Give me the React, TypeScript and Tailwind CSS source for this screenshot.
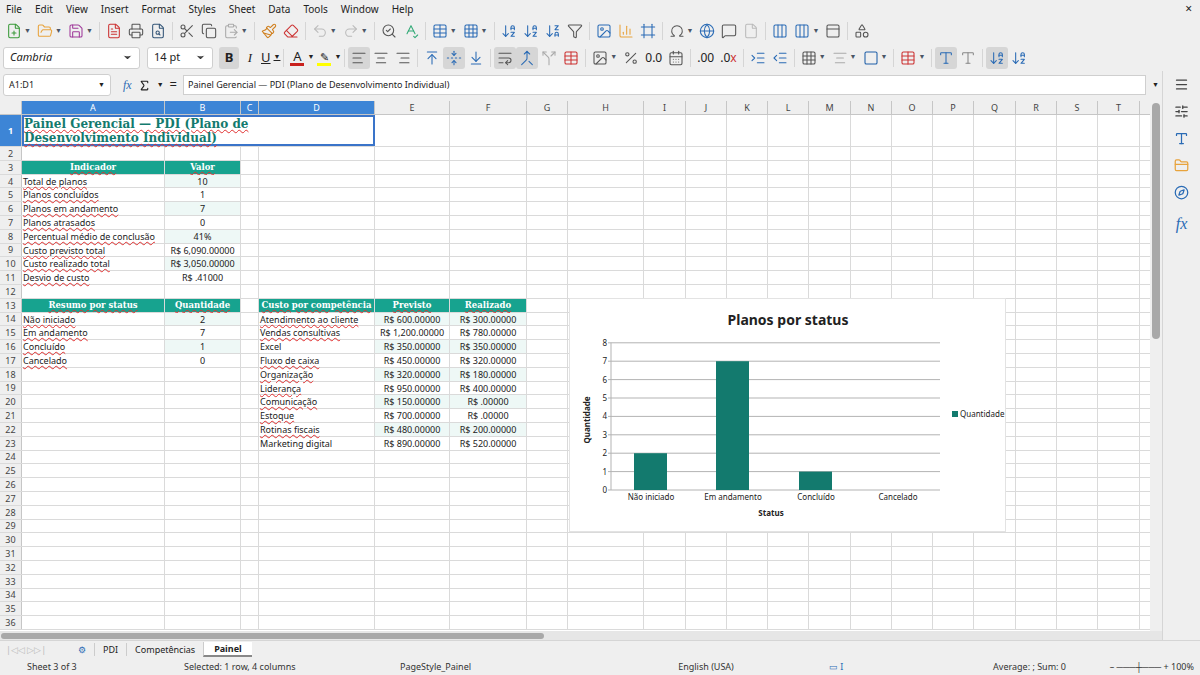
import {
  FilePlus, FolderOpen, Save, FileText, Printer, FileSearch, Scissors, Copy, ClipboardPaste, Paintbrush, Eraser,
  Undo2, Redo2, SearchCheck, SpellCheck, Table, Grid3x3, ArrowDownAZ, ArrowDownZA, Filter, Image, BarChart3,
  Frame, Omega, Globe, MessageSquare, File, Columns3, PanelTop, Shapes, ChevronDown, AlignLeft, AlignCenter,
  AlignRight, ArrowUpToLine, FoldVertical, ArrowDownToLine, WrapText, Merge, Split, Percent, CalendarDays,
  IndentIncrease, IndentDecrease, Square, Menu, SlidersHorizontal, Type, FolderClosed, Compass, Sigma,
} from 'lucide-react';

const COLS: [string, number][] = [
  ['A', 143], ['B', 76], ['C', 18], ['D', 116], ['E', 75], ['F', 77], ['G', 41], ['H', 76], ['I', 42], ['J', 41],
  ['K', 41], ['L', 41], ['M', 42], ['N', 41], ['O', 41], ['P', 41], ['Q', 42], ['R', 41], ['S', 41], ['T', 42],
];

type Cell = { t: string; c?: boolean; h?: boolean; sp?: boolean };
const DATA: Record<number, Record<string, Cell>> = {
  3: { A: { t: 'Indicador', h: true }, B: { t: 'Valor', h: true } },
  4: { A: { t: 'Total de planos', sp: true }, B: { t: '10', c: true } },
  5: { A: { t: 'Planos concluídos', sp: true }, B: { t: '1', c: true } },
  6: { A: { t: 'Planos em andamento', sp: true }, B: { t: '7', c: true } },
  7: { A: { t: 'Planos atrasados', sp: true }, B: { t: '0', c: true } },
  8: { A: { t: 'Percentual médio de conclusão', sp: true }, B: { t: '41%', c: true } },
  9: { A: { t: 'Custo previsto total', sp: true }, B: { t: 'R$ 6,090.00000', c: true } },
  10: { A: { t: 'Custo realizado total', sp: true }, B: { t: 'R$ 3,050.00000', c: true } },
  11: { A: { t: 'Desvio de custo', sp: true }, B: { t: 'R$ .41000', c: true } },
  13: {
    A: { t: 'Resumo por status', h: true }, B: { t: 'Quantidade', h: true },
    D: { t: 'Custo por competência', h: true }, E: { t: 'Previsto', h: true }, F: { t: 'Realizado', h: true },
  },
  14: { A: { t: 'Não iniciado', sp: true }, B: { t: '2', c: true }, D: { t: 'Atendimento ao cliente', sp: true }, E: { t: 'R$ 600.00000', c: true }, F: { t: 'R$ 300.00000', c: true } },
  15: { A: { t: 'Em andamento', sp: true }, B: { t: '7', c: true }, D: { t: 'Vendas consultivas', sp: true }, E: { t: 'R$ 1,200.00000', c: true }, F: { t: 'R$ 780.00000', c: true } },
  16: { A: { t: 'Concluído', sp: true }, B: { t: '1', c: true }, D: { t: 'Excel' }, E: { t: 'R$ 350.00000', c: true }, F: { t: 'R$ 350.00000', c: true } },
  17: { A: { t: 'Cancelado', sp: true }, B: { t: '0', c: true }, D: { t: 'Fluxo de caixa', sp: true }, E: { t: 'R$ 450.00000', c: true }, F: { t: 'R$ 320.00000', c: true } },
  18: { D: { t: 'Organização', sp: true }, E: { t: 'R$ 320.00000', c: true }, F: { t: 'R$ 180.00000', c: true } },
  19: { D: { t: 'Liderança', sp: true }, E: { t: 'R$ 950.00000', c: true }, F: { t: 'R$ 400.00000', c: true } },
  20: { D: { t: 'Comunicação', sp: true }, E: { t: 'R$ 150.00000', c: true }, F: { t: 'R$ .00000', c: true } },
  21: { D: { t: 'Estoque', sp: true }, E: { t: 'R$ 700.00000', c: true }, F: { t: 'R$ .00000', c: true } },
  22: { D: { t: 'Rotinas fiscais', sp: true }, E: { t: 'R$ 480.00000', c: true }, F: { t: 'R$ 200.00000', c: true } },
  23: { D: { t: 'Marketing digital' }, E: { t: 'R$ 890.00000', c: true }, F: { t: 'R$ 520.00000', c: true } },
};
const TINT: Record<number, string[]> = {
  4: ['B'], 6: ['B'], 8: ['B'], 10: ['B'],
  14: ['B', 'E', 'F'], 16: ['B', 'E', 'F'], 18: ['E', 'F'], 20: ['E', 'F'], 22: ['E', 'F'],
};

function Ico({ I, c = '#555', dd }: { I: any; c?: string; dd?: boolean }) {
  return (
    <div className="flex h-[22px] items-center px-[3px]">
      <I size={16} color={c} strokeWidth={1.6} />
      {dd && <span className="ml-[2px] text-[7px] text-gray-600">▼</span>}
    </div>
  );
}
const Sep = () => <div className="mx-[3px] h-[18px] w-px bg-[#d5d5d5]" />;

function Chart() {
  const y0 = 191, unit = 18.4;
  const bars = [['Não iniciado', 2, 81], ['Em andamento', 7, 163], ['Concluído', 1, 246], ['Cancelado', 0, 328]] as const;
  return (
    <div className="absolute left-[569px] top-[197px] h-[234px] w-[437px] border border-[#e3e3e3] bg-white">
      <svg width="437" height="234" style={{ fontFamily: '"Noto Sans", sans-serif' }}>
        <text x="218" y="26" textAnchor="middle" fontSize="14" fontWeight="bold" fill="#222">Planos por status</text>
        {Array.from({ length: 9 }, (_, i) => (
          <g key={i}>
            <line x1="38" x2="370" y1={y0 - i * unit} y2={y0 - i * unit} stroke="#b3b3b3" strokeWidth="1" />
            <text x="37" y={y0 - i * unit + 3} textAnchor="end" fontSize="8" fill="#222">{i}</text>
          </g>
        ))}
        <line x1="41" x2="41" y1={y0 - 8 * unit} y2={y0} stroke="#b3b3b3" />
        {bars.map(([l, v, cx]) => (
          <g key={l}>
            <rect x={cx - 17} y={y0 - v * unit} width="33" height={v * unit} fill="#137a6e" />
            <text x={cx} y={y0 + 10} textAnchor="middle" fontSize="8" fill="#222">{l}</text>
          </g>
        ))}
        <text x="201" y="217" textAnchor="middle" fontSize="8" fontWeight="bold" fill="#222">Status</text>
        <text transform="translate(20 121) rotate(-90)" textAnchor="middle" fontSize="8" fontWeight="bold" fill="#222">Quantidade</text>
        <rect x="382" y="112" width="6" height="6" fill="#137a6e" />
        <text x="390" y="118" fontSize="8" fill="#222">Quantidade</text>
      </svg>
    </div>
  );
}

export default function App() {
  const rows = Array.from({ length: 35 }, (_, i) => i + 2);
  return (
    <div className="flex h-[675px] w-[1200px] flex-col overflow-hidden bg-[#efefef] text-[#222]" style={{ fontFamily: '"Noto Sans", "Open Sans", sans-serif' }}>
      {/* menu */}
      <div className="flex h-[18px] items-center gap-[13px] px-[6px] text-[10px]">
        {['File', 'Edit', 'View', 'Insert', 'Format', 'Styles', 'Sheet', 'Data', 'Tools', 'Window', 'Help'].map((m) => (
          <span key={m}>{m}</span>
        ))}
        <span className="ml-auto pr-[2px] text-[12px]">×</span>
      </div>
      {/* toolbar 1 */}
      <div className="flex h-[26px] items-center px-[3px]">
        <Ico I={FilePlus} c="#3a9a3a" dd /><Ico I={FolderOpen} c="#e8a33c" dd /><Ico I={Save} c="#a03a9a" dd /><Sep />
        <Ico I={FileText} c="#c33" /><Ico I={Printer} /><Ico I={FileSearch} c="#357" /><Sep />
        <Ico I={Scissors} /><Ico I={Copy} /><Ico I={ClipboardPaste} c="#aaa" dd /><Sep />
        <Ico I={Paintbrush} c="#d08020" /><Ico I={Eraser} c="#c33" /><Sep />
        <Ico I={Undo2} c="#bbb" dd /><Ico I={Redo2} c="#bbb" dd /><Sep />
        <Ico I={SearchCheck} /><Ico I={SpellCheck} c="#3a7" /><Sep />
        <Ico I={Table} c="#2a6bb5" dd /><Ico I={Grid3x3} c="#2a6bb5" dd /><Sep />
        <Ico I={ArrowDownAZ} c="#2a6bb5" /><Ico I={ArrowDownAZ} c="#2a6bb5" /><Ico I={ArrowDownZA} c="#2a6bb5" /><Ico I={Filter} c="#555" /><Sep />
        <Ico I={Image} c="#2a6bb5" /><Ico I={BarChart3} c="#e8a33c" /><Ico I={Frame} c="#2a6bb5" /><Sep />
        <Ico I={Omega} dd /><Ico I={Globe} c="#2a6bb5" /><Ico I={MessageSquare} /><Ico I={File} c="#bbb" /><Sep />
        <Ico I={Columns3} c="#2a6bb5" /><Ico I={Columns3} c="#2a6bb5" dd /><Ico I={PanelTop} /><Sep />
        <Ico I={Shapes} />
      </div>
      {/* toolbar 2 */}
      <div className="flex h-[27px] items-center px-[3px] text-[11px]">
        <div className="flex h-[22px] w-[137px] items-center justify-between rounded-[3px] border border-[#cfcfcf] bg-white pl-[6px] pr-[6px] italic">
          Cambria <ChevronDown size={11} fill="#444" />
        </div>
        <div className="ml-[7px] flex h-[22px] w-[66px] items-center justify-between rounded-[3px] border border-[#cfcfcf] bg-white px-[6px]">
          14 pt <ChevronDown size={11} fill="#444" />
        </div>
        <div className="ml-[6px] flex h-[22px] w-[20px] items-center justify-center rounded-[3px] bg-[#d6d6d6] text-[13px] font-bold">B</div>
        <div className="flex w-[22px] justify-center text-[13px] italic" style={{ fontFamily: 'serif' }}>I</div>
        <div className="flex items-center text-[13px] underline">U<span className="ml-[3px] text-[7px] no-underline">▼</span></div>
        <Sep />
        <div className="flex flex-col items-center px-[3px] text-[13px] leading-[13px]">A<div className="h-[3px] w-[14px] bg-[#c9211e]" /></div><span className="text-[7px]">▼</span>
        <div className="flex flex-col items-center px-[3px] text-[11px] leading-[13px]">✎<div className="h-[3px] w-[14px] bg-[#ffff00]" /></div><span className="text-[7px]">▼</span>
        <Sep />
        <div className="rounded-[3px] bg-[#d6d6d6]"><Ico I={AlignLeft} /></div><Ico I={AlignCenter} /><Ico I={AlignRight} /><Sep />
        <Ico I={ArrowUpToLine} c="#2a6bb5" /><div className="rounded-[3px] bg-[#d6d6d6]"><Ico I={FoldVertical} c="#2a6bb5" /></div><Ico I={ArrowDownToLine} c="#2a6bb5" /><Sep />
        <div className="rounded-[3px] bg-[#d6d6d6]"><Ico I={WrapText} /></div><div className="rounded-[3px] bg-[#d6d6d6]"><Ico I={Merge} c="#2a6bb5" /></div><Ico I={Split} c="#aaa" /><Ico I={Table} c="#c33" /><Sep />
        <Ico I={Image} dd /><Ico I={Percent} /><span className="px-[3px] text-[12px]">0.0</span><Ico I={CalendarDays} /><Sep />
        <span className="px-[3px] text-[12px]">.00</span><span className="px-[3px] text-[12px]">.0<span className="text-[#c33]">x</span></span><Sep />
        <Ico I={IndentIncrease} c="#2a6bb5" /><Ico I={IndentDecrease} c="#2a6bb5" /><Sep />
        <Ico I={Grid3x3} dd /><Ico I={AlignCenter} c="#aaa" dd /><Ico I={Square} c="#1f5fa8" dd /><Sep />
        <Ico I={Table} c="#c33" dd /><Sep />
        <div className="rounded-[3px] bg-[#d6d6d6]"><Ico I={Type} c="#2a6bb5" /></div><Ico I={Type} c="#888" /><Sep />
        <div className="rounded-[3px] bg-[#d6d6d6]"><Ico I={ArrowDownAZ} c="#2a6bb5" /></div><Ico I={ArrowDownAZ} c="#2a6bb5" />
      </div>
      <div className="flex min-h-0 flex-1">
        <div className="flex min-w-0 flex-1 flex-col">
          {/* formula bar */}
          <div className="flex h-[28px] items-center gap-[6px] px-[3px] text-[9px]">
            <div className="flex h-[22px] w-[108px] items-center justify-between rounded-[3px] border border-[#cfcfcf] bg-white px-[5px]">
              A1:D1 <span className="text-[7px]">▼</span>
            </div>
            <span className="ml-[6px] text-[12px] italic text-[#2a6bb5]" style={{ fontFamily: 'serif' }}>fx</span>
            <Sigma size={13} /><span className="text-[7px]">▼</span><span className="text-[13px]">=</span>
            <div className="flex h-[20px] flex-1 items-center border border-[#cfcfcf] bg-white px-[4px]">Painel Gerencial — PDI (Plano de Desenvolvimento Individual)</div>
            <span className="text-[7px]">▼</span>
          </div>
          {/* grid */}
          <div className="relative mt-[2px] flex min-h-0 flex-1 overflow-hidden bg-white">
            <div className="flex-1 overflow-hidden text-[9px]">
              <div className="flex h-[14px] border-b border-[#c6c6c6] bg-[#efefef] text-[9px] text-[#444]">
                <div className="w-[22px] shrink-0 border-r border-[#c6c6c6]" />
                {COLS.map(([n, w], i) => (
                  <div key={n} style={{ width: w }} className={`flex shrink-0 items-center justify-center border-r border-[#c6c6c6] ${i < 4 ? 'bg-[#3d85d6] text-white' : ''}`}>{n}</div>
                ))}
              </div>
              <div className="flex h-[32px] border-b border-[#dadada]">
                <div className="flex w-[22px] shrink-0 items-center justify-center border-r border-[#c6c6c6] bg-[#3d85d6] text-[9px] font-bold text-white">1</div>
                <div className="w-[353px] shrink-0 border-2 border-[#3a74c9] pr-[40px] text-[12px] font-bold leading-[14px] text-[#137a6e] underline decoration-[#e03030] decoration-wavy decoration-1" style={{ fontFamily: '"DejaVu Serif", serif' }}>
                  Painel Gerencial — PDI (Plano de Desenvolvimento Individual)
                </div>
                {COLS.slice(4).map(([n, w]) => <div key={n} style={{ width: w }} className="shrink-0 border-r border-[#dadada]" />)}
              </div>
              {rows.map((r) => (
                <div key={r} className="flex h-[13.8px] border-b border-[#dadada] leading-[13px]">
                  <div className="flex w-[22px] shrink-0 items-center justify-center border-r border-[#c6c6c6] bg-[#efefef] text-[9px] text-[#444]">{r}</div>
                  {COLS.map(([n, w]) => {
                    const cell = DATA[r]?.[n];
                    const tint = TINT[r]?.includes(n);
                    let cls = 'shrink-0 overflow-visible whitespace-nowrap border-r border-[#dadada] px-[1px]';
                    if (cell?.h) cls += ' bg-[#17a38f] text-center font-bold text-white';
                    else if (tint) cls += ' bg-[#eef8f6]';
                    if (cell?.c) cls += ' text-center';
                    return (
                      <div key={n} style={{ width: w, fontFamily: cell?.h ? '"DejaVu Serif", serif' : undefined, fontSize: cell?.h ? 8.5 : undefined }} className={cls}>
                        {cell && (
                          <span className={cell.sp || cell.h ? 'underline decoration-[#e03030] decoration-wavy decoration-1' : ''}>{cell.t}</span>
                        )}
                      </div>
                    );
                  })}
                </div>
              ))}
              <Chart />
            </div>
            <div className="flex w-[12px] shrink-0 flex-col bg-[#efefef] pt-[2px]">
              <div className="mx-[2px] h-[236px] rounded-sm bg-[#a8a8a8]" />
            </div>
          </div>
          {/* h scroll */}
          <div className="flex h-[9px] items-center bg-[#e6e6e6]">
            <div className="ml-[1px] h-[6px] w-[543px] rounded-sm bg-[#a8a8a8]" />
          </div>
        </div>
        {/* sidebar */}
        <div className="flex w-[38px] shrink-0 flex-col items-center gap-[12px] border-l border-[#d5d5d5] pt-[6px]">
          <Menu size={15} color="#444" />
          <SlidersHorizontal size={15} color="#444" />
          <Type size={15} color="#2a6bb5" />
          <FolderClosed size={15} color="#e8a33c" />
          <Compass size={15} color="#2a6bb5" />
          <span className="italic text-[#2a6bb5]" style={{ fontFamily: 'serif' }}>fx</span>
        </div>
      </div>
      {/* tabs */}
      <div className="flex h-[18px] items-center border-t border-[#d5d5d5] text-[9px]">
        <span className="w-[70px] pl-[6px] text-[#bbb]">|◁◁ ▷▷|</span>
        <span className="px-[8px] text-[#2a6bb5]">⚙</span>
        <span className="border-l border-[#ccc] px-[8px]">PDI</span>
        <span className="border-l border-[#ccc] px-[8px]">Competências</span>
        <span className="border-b-2 border-l border-[#ccc] border-b-[#888] bg-white px-[10px] font-bold">Painel</span>
      </div>
      {/* status */}
      <div className="flex h-[17px] items-center text-[9px] text-[#333]">
        <span className="w-[180px] pl-[27px]">Sheet 3 of 3</span>
        <span className="w-[216px] pl-[4px]">Selected: 1 row, 4 columns</span>
        <span className="w-[210px] pl-[4px]">PageStyle_Painel</span>
        <span className="w-[200px] text-center">English (USA)</span>
        <span className="w-[60px] text-center text-[#2a6bb5]">▭ I</span>
        <span className="w-[200px] text-right">Average: ; Sum: 0</span>
        <span className="ml-auto pr-[6px]">–  ───┼───  +  100%</span>
      </div>
    </div>
  );
}
